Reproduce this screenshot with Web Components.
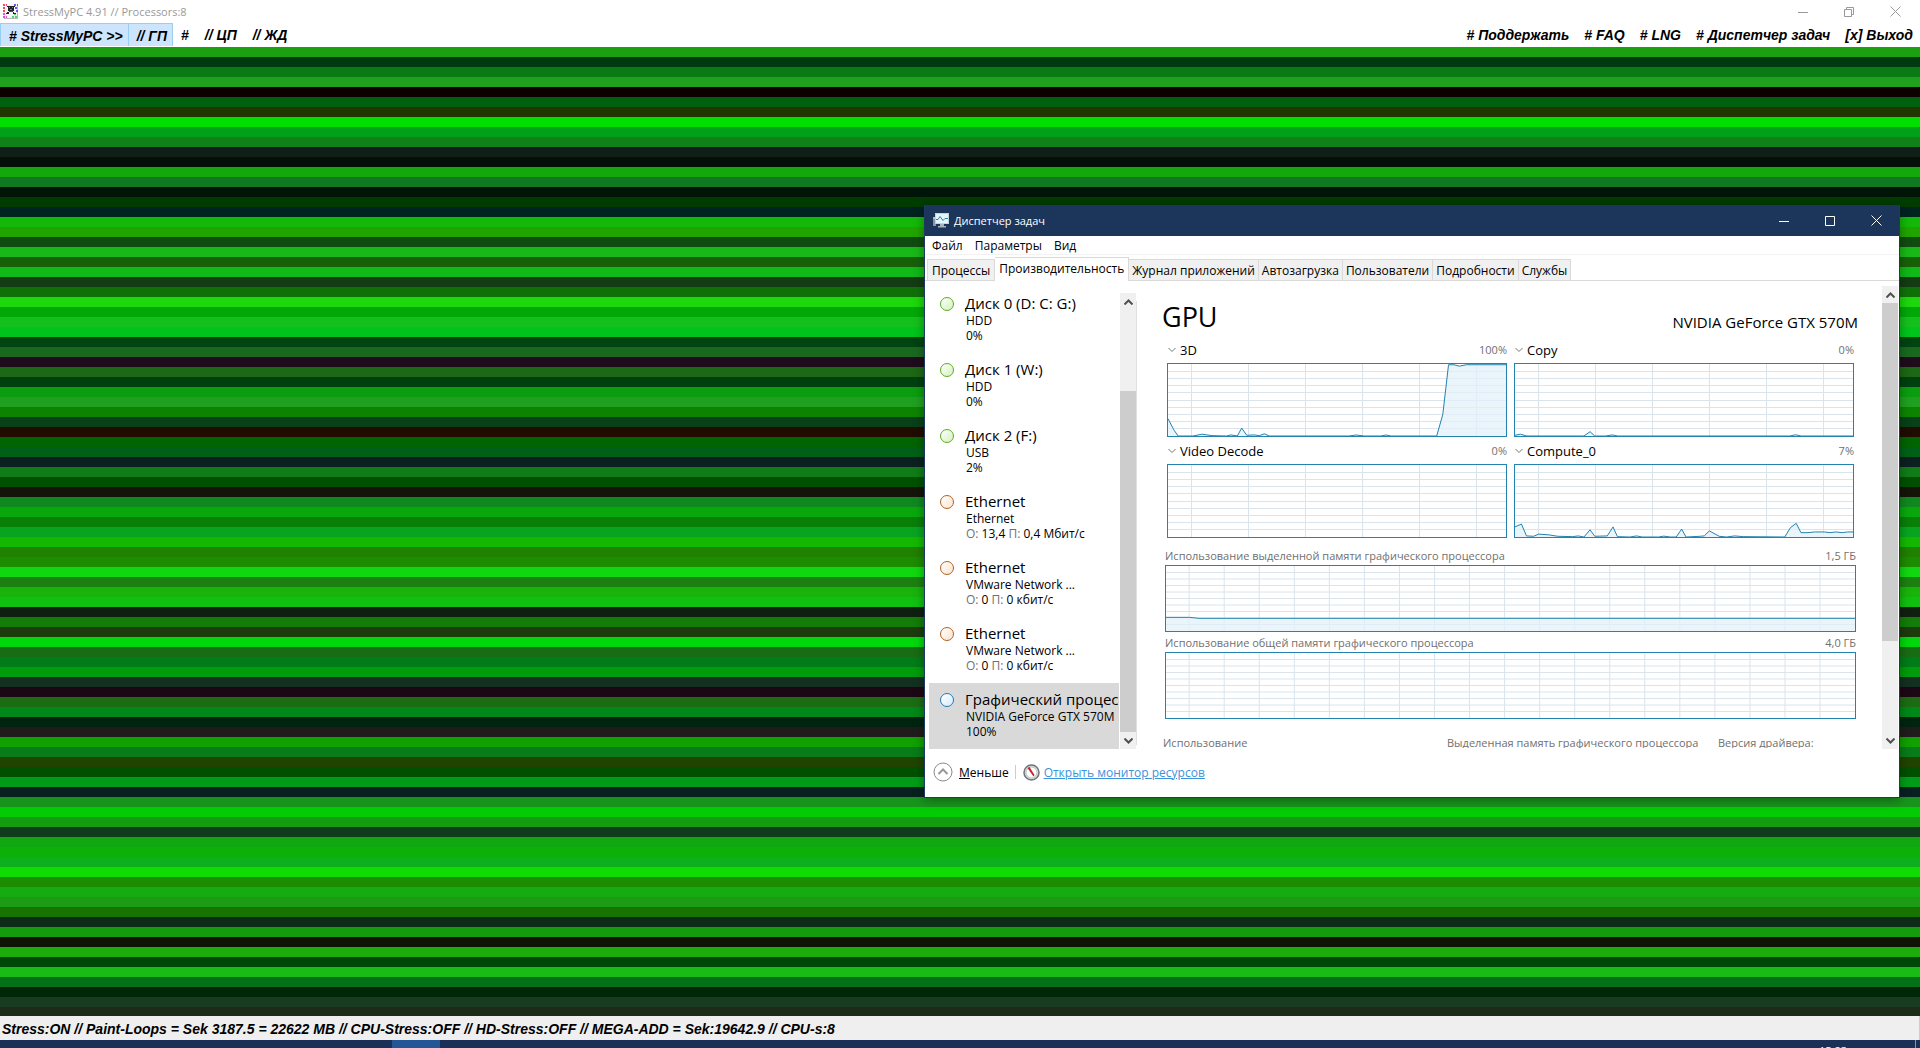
<!DOCTYPE html>
<html lang="ru">
<head>
<meta charset="utf-8">
<title>StressMyPC 4.91</title>
<style>
  html, body { margin: 0; height: 100%; }
  body { overflow: hidden; font-family: "Open Sans", "Noto Sans", sans-serif; font-size: 12px; color: #000; }
</style>
</head>
<body>
<stress-app></stress-app>

<script>
const define = (name, html, setup) => {
  const tpl = document.createElement('template');
  tpl.innerHTML = '<style>*{box-sizing:border-box}button{font:inherit;color:inherit;background:none;border:0;padding:0;margin:0;cursor:default}</style>' + html;
  customElements.define(name, class extends HTMLElement {
    constructor() {
      super();
      this.attachShadow({ mode: 'open' }).append(tpl.content.cloneNode(true));
    }
    connectedCallback() { if (setup) setup(this, this.shadowRoot); }
  });
};

/* Outer window caption */
define('app-caption', `
<style>
  :host { display: flex; align-items: center; justify-content: space-between; height: 23px; padding: 0 2px 0 3px; background: #fff; color: #999; font-size: 11px; }
  .title { display: flex; align-items: center; gap: 5px; line-height: 16px; }
  .controls { display: flex; }
  .controls button { display: grid; place-items: center; width: 46px; height: 20px; }
  svg { display: block; }
</style>
<div class="title">
  <svg width="15" height="15" viewBox="0 0 15 15" shape-rendering="crispEdges">
    <rect width="15" height="15" fill="#f6f2f8"/><path d="M14.5 1v13.5H1" stroke="#b8b8b8" fill="none"/>
    <path d="M0 1h4M0 4h3M0 7h2" stroke="#ee4a5c" stroke-width="2" stroke-dasharray="2 1"/>
    <path d="M11 1h4M12 4h3M13 7h2" stroke="#6a5cf0" stroke-width="2" stroke-dasharray="2 1"/>
    <path d="M0 10h3M0 13h4" stroke="#ea4ce0" stroke-width="2" stroke-dasharray="2 1"/>
    <path d="M11 10h3M9 13h5" stroke="#44dd66" stroke-width="2" stroke-dasharray="2 1"/>
    <path d="M5 2h6v5H5zM4 8h2v2H3V9h1zM10 8h1v1h2v1h-3zM4 2h1v1H4zM11 2h1v1h-1z" fill="#1a2228"/>
    <path d="M6 3h1v1H6zM9 3h1v1H9zM7 5h2v1H7z" fill="#5d9c68"/><path d="M6 7h4v1H6z" fill="#4a5258"/>
  </svg>
  <span>StressMyPC 4.91 // Processors:8</span>
</div>
<div class="controls">
  <button aria-label="Свернуть"><svg width="10" height="10"><path d="M0 5.5h10" stroke="#999"/></svg></button>
  <button aria-label="Восстановить"><svg width="10" height="10" fill="none" stroke="#999"><path d="M.5 2.5h7v7h-7zM2.5 2.5v-2h7v7h-2"/></svg></button>
  <button aria-label="Закрыть"><svg width="11" height="11" stroke="#999"><path d="M.5 .5l10 10M10.5 .5l-10 10"/></svg></button>
</div>`);

/* Outer window menu */
define('app-menu', `
<style>
  :host { display: flex; justify-content: space-between; height: 24px; background: #fff; font: italic bold 14px/20px "Liberation Sans", Arial, sans-serif; }
  nav { display: flex; align-items: center; }
  button { height: 24px; padding-bottom: 1px; white-space: nowrap; }
  .hot { height: 23px; padding: 2px 5px 0 8px; background: #cce4fc; border: 1px solid #99cdf2; border-bottom: 0; align-self: flex-start; }
  .hot + .hot { border-left: 0; }
  .plain { display: flex; gap: 16px; padding-left: 8px; }
  .right { gap: 15px; padding-right: 7px; }
</style>
<nav>
  <button class="hot"># StressMyPC &gt;&gt;</button><button class="hot">// ГП</button>
  <div class="plain"><button>#</button><button>// ЦП</button><button>// ЖД</button></div>
</nav>
<nav class="right">
  <button># Поддержать</button><button># FAQ</button><button># LNG</button><button># Диспетчер задач</button><button>[x] Выход</button>
</nav>`);

/* Stress canvas: bands of ten pixels in random greens */
const BANDS = ('1aa010 003a10 0a7a14 20a01c 0c0000 006010 203800 00e000 00a018 108018 102018 041008 14a80c 107820 001408 003c00 002420 ' +
  '14b808 20a400 104c10 18b818 186008 10b818 143c14 107008 1cd80c 00a808 14c01c 00c41c 004410 1a6820 1e0c1c 1c6814 00400f 0c9c10 20a020 0c8400 ' +
  '084018 200c00 006400 006018 0c2020 107c18 005000 141408 108820 08a80c 088008 08a420 14b800 208000 1c8c00 10d810 1c8010 18b40c 10c010 102010 ' +
  '147c08 1c3c0c 00d80c 186c14 007c18 009c0c 143020 1c0814 1c6c14 008818 002410 201c1c 10a000 087c18 204400 005000 009c18 082020 18941c 04cc04 ' +
  '149c10 103c1c 10a810 0cb008 0cb01c 10dc04 1c8c00 14ac10 1c9c14 187400 0c2c18 149c0c 101404 1cac0c 004808 18bc14 047018 002808 183c20 1c2c18').split(' ');
define('band-canvas', `
<style>
  :host { display: block; position: relative; overflow: hidden; }
  #bands div { height: 10px; }
</style>
<div id="bands"></div><slot></slot>`, (el, root) => {
  root.getElementById('bands').innerHTML = BANDS.map(c => `<div style="background:#${c}"></div>`).join('');
});

/* Load chart with grid */
define('usage-chart', `
<style>
  :host { display: block; border: 1px solid #2382b0; background: #fff; }
  svg { display: block; width: 100%; height: 100%; }
  path { vector-effect: non-scaling-stroke; fill: none; }
  .grid { stroke: #d9e4ec; shape-rendering: crispEdges; }
  .area { fill: #e3f0fa; fill-opacity: .75; }
  .line { stroke: #2382b0; }
</style>
<svg viewBox="0 0 100 100" preserveAspectRatio="none"><path class="grid"/><path class="area"/><path class="line"/></svg>`, (el, root) => {
  const start = +el.getAttribute('start'), step = +el.getAttribute('step');
  let grid = '';
  for (let x = start; x < 100; x += step) grid += `M${x} 0V100`;
  for (let y = 10; y < 100; y += 10) grid += `M0 ${y}H100`;
  root.querySelector('.grid').setAttribute('d', grid);
  const pts = el.getAttribute('points');
  if (pts) {
    root.querySelector('.area').setAttribute('d', `M0 100L${pts}L100 100Z`);
    root.querySelector('.line').setAttribute('d', `M${pts}`);
  }
});

define('engine-graph', `
<style>
  :host { display: block; min-width: 0; }
  header { display: flex; align-items: center; height: 22px; padding-bottom: 4px; line-height: 18px; }
  button { display: flex; align-items: center; gap: 4px; padding-left: 1px; font-size: 13px; }
  data { margin-left: auto; color: #707070; font-size: 11px; }
  usage-chart { height: 74px; }
</style>
<header><button><svg width="8" height="6" fill="none" stroke="#777"><path d="M.5 1l3.5 3.5L7.5 1"/></svg><slot></slot></button><data></data></header>
<usage-chart start="6.9" step="16.9"></usage-chart>`, (el, root) => {
  root.querySelector('data').textContent = el.getAttribute('value');
});

define('memory-graph', `
<style>
  :host { display: block; }
  header { display: flex; justify-content: space-between; height: 20px; line-height: 22px; color: #707070; font-size: 11px; }
  usage-chart { height: 67px; }
</style>
<header><slot></slot><data></data></header>
<usage-chart start="3.36" step="5.087"></usage-chart>`, (el, root) => {
  root.querySelector('data').textContent = el.getAttribute('value');
});

/* Scrollbar rail */
define('scroll-rail', `
<style>
  :host { display: flex; flex-direction: column; width: 16px; background: #f0f0f0; }
  button { display: grid; place-items: center; height: 17px; flex: none; }
  .before { flex: var(--before, 0); } .thumb { flex: var(--thumb, 1); background: #cdcdcd; } .after { flex: var(--after, 0); }
</style>
<button aria-label="Вверх"><svg width="9" height="6" fill="none" stroke="#505050" stroke-width="2"><path d="M.5 5.5l4-4 4 4"/></svg></button>
<div class="before"></div><div class="thumb"></div><div class="after"></div>
<button aria-label="Вниз"><svg width="9" height="6" fill="none" stroke="#505050" stroke-width="2"><path d="M.5 .5l4 4 4-4"/></svg></button>`);

/* Sidebar row */
define('perf-item', `
<style>
  :host { display: flex; gap: 11px; height: 66px; padding: 7px 0 0 11px; overflow: hidden; white-space: nowrap; --ring: #5aab1e; --fill: #d3f2bc; }
  :host([kind=net]) { --ring: #b0611f; --fill: #fce3cd; }
  :host([kind=gpu]) { --ring: #1f7bb8; --fill: #d6ebfa; }
  :host([selected]) { background: #d9d9d9; }
  i { flex: none; width: 14px; height: 14px; margin-top: 3px; border: 1px solid var(--ring); border-radius: 50%; background: linear-gradient(135deg, #fff, var(--fill)); }
  .name { font-size: 15px; line-height: 19px; }
  .info { padding-left: 1px; line-height: 15px; font-size: 12px; }
  ::slotted(p) { margin: 0; }
</style>
<i></i><div><div class="name"><slot name="name"></slot></div><div class="info"><slot></slot></div></div>`);

/* Task manager window */
define('task-manager', `
<style>
  :host { display: block; background: #fff; border: 1px solid #1e3a60; border-top: 0; box-shadow: 0 2px 10px rgba(0,0,0,.35); }
  .caption { display: flex; justify-content: space-between; align-items: center; height: 31px; padding-left: 8px; background: #1b365a; color: #fff; }
  .title, .controls, .menu, .tabs, .body, footer { display: flex; }
  .title { align-items: center; gap: 5px; font-size: 11px; }
  .controls button { display: grid; place-items: center; width: 46px; height: 30px; }
  .menu { height: 19px; gap: 12px; padding-left: 7px; line-height: 19px; border-bottom: 1px solid #f2f2f2; }
  .tabs { height: 26px; padding: 3px 0 0 2px; align-items: flex-end; border-bottom: 1px solid #d9d9d9; }
  .tabs button { height: 21px; padding: 1px 3px 0; line-height: 20px; background: #f0f0f0; border: 1px solid #d9d9d9; border-width: 1px 1px 0 0; white-space: nowrap; }
  .tabs button:first-child { border-left-width: 1px; padding: 1px 4px 0; }
  .tabs .on { height: 24px; margin-bottom: -1px; padding: 0 4px 1px; background: #fff; }
  .side { flex: none; display: flex; width: 211px; padding: 6px 0 0 4px; }
  .list { width: 191px; flex: none; padding-right: 1px; }
  .side scroll-rail { margin-top: 6px; --before: 81; --thumb: 341; flex: none; }
  .rule { width: 1px; margin: 20px 0 4px; background: #e0e0e0; }
  main { flex: 1; min-width: 0; padding: 0 24px 0 25px; }
  main + scroll-rail { margin: 5px 1px 0 0; --thumb: 338; --after: 91; }
  .head { display: flex; height: 60px; justify-content: space-between; align-items: flex-start; }
  h1 { margin: 0; padding-top: 16px; font-weight: 400; font-size: 27px; line-height: 40px; }
  .model { padding-top: 30px; font-size: 15px; line-height: 22px; }
  .engines { display: grid; grid-template-columns: 1fr 1fr; gap: 5px 7px; padding: 0 4px 0 5px; }
  .memory { padding: 7px 2px 0 3px; }
  .stats { display: grid; grid-template-columns: 284px 271px 1fr; height: 29px; padding: 16px 0 0 1px; line-height: 16px; overflow: hidden; color: #707070; font-size: 11px; white-space: nowrap; }
  footer { height: 48px; align-items: center; padding: 0 0 2px 8px; }
  footer button { display: flex; align-items: center; gap: 6px; }
  footer .sep { width: 1px; height: 14px; margin: 0 7px 0 6px; background: #ccc; }
  footer a { display: flex; align-items: center; gap: 4px; color: #3c93dc; }
  svg { display: block; }
  .mute { color: #707070; }
</style>
<div class="caption">
  <div class="title">
    <svg width="16" height="15" viewBox="0 0 16 15"><path d="M0 4h3v9H0z" fill="#8c959c"/><path d="M0 5h2" stroke="#dfe6ea"/><path d="M2 0h14v11H2z" fill="#c9d2d8"/><path d="M3 1h12v9H3z" fill="#e4f5fc"/><path d="M3 6.5h2l2-3 3 4 2-2h3" fill="none" stroke="#1c86b8"/><path d="M7 11h4v2h2v1.500H5V13h2z" fill="#a9b3ba"/></svg>
    <span>Диспетчер задач</span>
  </div>
  <div class="controls">
    <button aria-label="Свернуть"><svg width="10" height="10"><path d="M0 5.5h10" stroke="#fff"/></svg></button>
    <button aria-label="Развернуть"><svg width="10" height="10"><path d="M.5 .5h9v9h-9z" fill="none" stroke="#fff"/></svg></button>
    <button aria-label="Закрыть"><svg width="11" height="11" stroke="#fff"><path d="M.5 .5l10 10M10.5 .5l-10 10"/></svg></button>
  </div>
</div>
<div class="menu"><button>Файл</button><button>Параметры</button><button>Вид</button></div>
<div class="tabs"><button>Процессы</button><button class="on">Производительность</button><button>Журнал приложений</button><button>Автозагрузка</button><button>Пользователи</button><button>Подробности</button><button>Службы</button></div>
<div class="body">
  <div class="side">
    <div class="list">
      <perf-item><span slot="name">Диск 0 (D: C: G:)</span><p>HDD</p><p>0%</p></perf-item>
      <perf-item><span slot="name">Диск 1 (W:)</span><p>HDD</p><p>0%</p></perf-item>
      <perf-item><span slot="name">Диск 2 (F:)</span><p>USB</p><p>2%</p></perf-item>
      <perf-item kind="net"><span slot="name">Ethernet</span><p>Ethernet</p><p><span class="mute">О:</span> 13,4 <span class="mute">П:</span> 0,4 Мбит/с</p></perf-item>
      <perf-item kind="net"><span slot="name">Ethernet</span><p>VMware Network ...</p><p><span class="mute">О:</span> 0 <span class="mute">П:</span> 0 кбит/с</p></perf-item>
      <perf-item kind="net"><span slot="name">Ethernet</span><p>VMware Network ...</p><p><span class="mute">О:</span> 0 <span class="mute">П:</span> 0 кбит/с</p></perf-item>
      <perf-item kind="gpu" selected><span slot="name">Графический процессор</span><p>NVIDIA GeForce GTX 570M</p><p>100%</p></perf-item>
    </div>
    <scroll-rail></scroll-rail>
  </div>
  <div class="rule"></div>
  <main>
    <div class="head"><h1>GPU</h1><div class="model">NVIDIA GeForce GTX 570M</div></div>
    <div class="engines">
      <engine-graph value="100%" points="0,76 1.8,92 3,100 7.4,100 10,97.5 13,99.5 17.3,100 18.6,98.5 20.5,100 21.8,89 23.3,99 25.5,98.5 27,99.5 28.5,97 30,100 53.5,100 55.7,98.6 58,100 63,100 64.5,98.6 66,100 79.5,100 81.3,70 83,1 84.6,1 86.2,3 88.3,1 100,1">3D</engine-graph>
      <engine-graph value="0%" points="0,99 1.6,97.5 3.5,100 20.4,100 22.2,94 23.6,100 26.8,100 28.8,98.5 30.4,100 81.3,100 83,98.3 84.7,100 100,100">Copy</engine-graph>
      <engine-graph value="0%">Video Decode</engine-graph>
      <engine-graph value="7%" points="0,86 1.9,82 3.4,98.5 5.5,99 7,96 10,97 12.6,99 17,99.5 18.7,98.5 20.4,100 22.2,90 23.6,99 27.3,98.5 29,86 30.3,99.5 34,100 36,98.5 37.6,100 42.5,100 44,98.8 46,100 47.7,100 49.3,89 50.6,100 54.8,99 56,98.5 57.5,91.5 60.4,99 62.6,100 65,98.5 67.5,99.5 79.8,100 81.5,87 83.2,81 84.6,94 86.7,94 88.6,93 91.6,93 93.2,94 95,93 96.8,94 98.4,93 100,93">Compute_0</engine-graph>
    </div>
    <div class="memory">
      <memory-graph value="1,5 ГБ" points="0,79 3.4,79 4.8,80.5 100,80.5">Использование выделенной памяти графического процессора</memory-graph>
      <memory-graph value="4,0 ГБ">Использование общей памяти графического процессора</memory-graph>
    </div>
    <div class="stats"><div>Использование</div><div>Выделенная память графического процессора</div><div>Версия драйвера:</div></div>
  </main>
  <scroll-rail></scroll-rail>
</div>
<footer>
  <button><svg width="20" height="20" fill="none" stroke="#8a8a8a"><circle cx="10" cy="10" r="9"/><path d="M5.5 12l4.5-4.5 4.5 4.5" stroke="#999" stroke-width="2"/></svg><span><u>М</u>еньше</span></button>
  <span class="sep"></span>
  <a href="#monitor"><svg width="17" height="17" viewBox="0 0 17 17"><circle cx="8.5" cy="8.5" r="7.5" fill="#dfe3e5" stroke="#6f7478" stroke-width="1.5"/><circle cx="8.5" cy="8.5" r="5.5" fill="#fff" stroke="#b5bbbf"/><path d="M4.500 4l2-1 5 8-1 1.500z" fill="#c62026"/></svg>Открыть монитор ресурсов</a>
</footer>`, (el, root) => {
  root.querySelectorAll('engine-graph, memory-graph').forEach(g => {
    const pts = g.getAttribute('points');
    if (!pts) return;
    const chart = g.shadowRoot.querySelector('usage-chart');
    chart.setAttribute('points', pts);
    chart.connectedCallback();
  });
});

define('status-bar', `
<style>
  :host { display: block; height: 24px; padding-left: 2px; border-right: 1px solid #ccc; background: #efefef; font: italic bold 14px/26px "Liberation Sans", Arial, sans-serif; white-space: nowrap; }
</style><slot></slot>`);

define('task-bar', `
<style>
  :host { display: flex; justify-content: space-between; height: 8px; overflow: hidden; background: #1b3056; color: #fff; }
  .active { width: 48px; margin-left: 392px; background: #245596; }
  .tray { display: flex; gap: 68px; padding-right: 4px; font-size: 11px; line-height: 16px; }
  .tray i { width: 1px; background: #8894a8; }
  time { padding-top: 3px; }
</style>
<div class="active"></div><div class="tray"><time>15:23</time><i></i></div>`);

define('stress-app', `
<style>
  :host { display: flex; flex-direction: column; height: 100vh; }
  band-canvas { flex: 1; min-height: 0; }
  task-manager { position: absolute; left: 924px; right: 20px; top: 158px; }
</style>
<app-caption></app-caption>
<app-menu></app-menu>
<band-canvas><task-manager></task-manager></band-canvas>
<status-bar>Stress:ON // Paint-Loops = Sek 3187.5 = 22622 MB // CPU-Stress:OFF // HD-Stress:OFF // MEGA-ADD = Sek:19642.9 // CPU-s:8</status-bar>
<task-bar></task-bar>`);
</script>
</body>
</html>
